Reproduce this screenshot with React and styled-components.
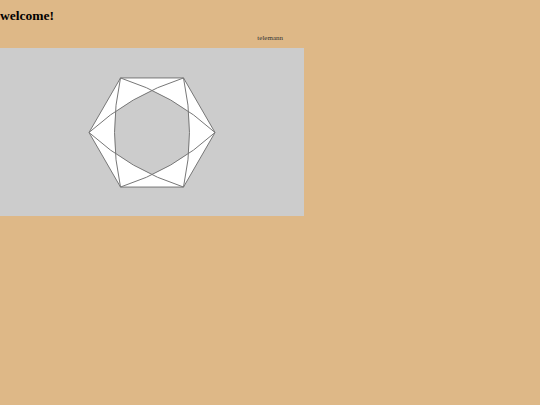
import React from "react";
import styled, { createGlobalStyle } from "styled-components";

const GlobalStyle = createGlobalStyle`
  html, body {
    margin: 0;
    padding: 0;
    background: burlywood;
    font-family: "Liberation Serif", "Times New Roman", serif;
  }
`;

const Page = styled.div`
  display: flex;
  flex-direction: column;
  width: 304px;
`;

const Title = styled.h1`
  margin: 0;
  padding-top: 8px;
  font-size: 13.5px;
  font-weight: bold;
  color: #000;
  line-height: 16px;
`;

const Byline = styled.div`
  align-self: flex-end;
  margin: 10px 21px 0 0;
  font-size: 7px;
  line-height: 8px;
  color: #333;
`;

const Board = styled.div`
  margin-top: 6px;
  width: 304px;
  height: 168px;
  background: #ccc;
`;

const R = 63;
const ARC = 255;
const CX = 152;
const CY = 132.5 - 48;

const vertex = (i) => {
  const a = Math.PI + (i * Math.PI) / 3;
  return [CX + R * Math.cos(a), CY + R * Math.sin(a)];
};

const pt = (p) => `${p[0].toFixed(2)} ${p[1].toFixed(2)}`;

// three arcs, each bulging toward the vertex it skips
const curvedTriangle = (a, b, c) => {
  const [p, q, s] = [vertex(a), vertex(b), vertex(c)];
  const arc = `A ${ARC} ${ARC} 0 0 1`;
  return `M ${pt(p)} ${arc} ${pt(q)} ${arc} ${pt(s)} ${arc} ${pt(p)} Z`;
};

function Rosette() {
  const hex = [0, 1, 2, 3, 4, 5].map((i) => pt(vertex(i))).join(" ");
  const triA = curvedTriangle(1, 3, 5);
  const triB = curvedTriangle(0, 2, 4);
  return (
    <svg width="304" height="168" viewBox="0 0 304 168">
      <defs>
        <clipPath id="triA">
          <path d={triA} />
        </clipPath>
      </defs>
      <polygon points={hex} fill="#fff" stroke="#777" strokeWidth="1" />
      <path d={triB} fill="#ccc" clipPath="url(#triA)" />
      <path d={triA} fill="none" stroke="#777" strokeWidth="1" />
      <path d={triB} fill="none" stroke="#777" strokeWidth="1" />
    </svg>
  );
}

export default function App() {
  return (
    <>
      <GlobalStyle />
      <Page>
        <Title>welcome!</Title>
        <Byline>telemann</Byline>
        <Board>
          <Rosette />
        </Board>
      </Page>
    </>
  );
}
